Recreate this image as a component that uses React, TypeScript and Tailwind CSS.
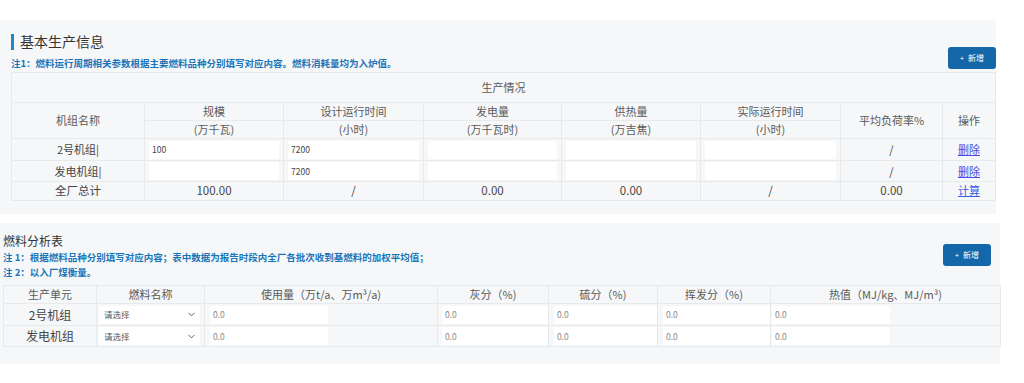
import { ChevronDown } from "lucide-react";

const font = { fontFamily: '"Noto Sans CJK SC", "Noto Sans", sans-serif' };

const units = [
  { name: "2号机组|", scale: "100", hours: "7200" },
  { name: "发电机组|", scale: "", hours: "7200" },
];

function AddButton() {
  return (
    <button className="flex h-[22px] w-[48px] items-center justify-center gap-[4px] rounded-[3px] bg-[#1467a8] text-[8px] text-white">
      <span className="text-[7px]">+</span>
      <span>新增</span>
    </button>
  );
}

function Cell({
  children,
  className = "",
  rowSpan,
  colSpan,
}: {
  children?: React.ReactNode;
  className?: string;
  rowSpan?: number;
  colSpan?: number;
}) {
  return (
    <td
      rowSpan={rowSpan}
      colSpan={colSpan}
      className={`border border-[#e8e9eb] p-0 text-center align-middle ${className}`}
    >
      {children}
    </td>
  );
}

function TextBox({ value, className = "" }: { value: string; className?: string }) {
  return (
    <div className={`flex h-[18px] items-center bg-white pl-[3px] text-left text-[8.5px] text-[#444] ${className}`}>
      {value}
    </div>
  );
}

function ProductionTable() {
  const widths = [133, 139, 140, 138, 139, 140, 102, 53];
  return (
    <table className="ml-[11px] w-[984px] table-fixed border-collapse text-[11px] text-[#5a5a5a]">
      <colgroup>
        {widths.map((w, i) => (
          <col key={i} style={{ width: w }} />
        ))}
      </colgroup>
      <tbody>
        <tr className="h-[30px]">
          <Cell colSpan={8}>生产情况</Cell>
        </tr>
        <tr className="h-[18px]">
          <Cell rowSpan={2}>机组名称</Cell>
          <Cell>规模</Cell>
          <Cell>设计运行时间</Cell>
          <Cell>发电量</Cell>
          <Cell>供热量</Cell>
          <Cell>实际运行时间</Cell>
          <Cell rowSpan={2}>平均负荷率%</Cell>
          <Cell rowSpan={2}>操作</Cell>
        </tr>
        <tr className="h-[18px]">
          <Cell>(万千瓦)</Cell>
          <Cell>(小时)</Cell>
          <Cell>(万千瓦时)</Cell>
          <Cell>(万吉焦)</Cell>
          <Cell>(小时)</Cell>
        </tr>
        {units.map((u, i) => (
          <tr key={u.name} className={i === 0 ? "h-[22px]" : "h-[21px]"}>
            <Cell className="text-[#444]">{u.name}</Cell>
            <Cell className="px-[4px]"><TextBox value={u.scale} /></Cell>
            <Cell className="px-[4px]"><TextBox value={u.hours} /></Cell>
            <Cell className="px-[4px]"><TextBox value="" /></Cell>
            <Cell className="px-[4px]"><TextBox value="" /></Cell>
            <Cell className="px-[4px]"><TextBox value="" /></Cell>
            <Cell className="text-[#444]">/</Cell>
            <Cell>
              <a className="text-[11px] text-[#4b4be6] underline">删除</a>
            </Cell>
          </tr>
        ))}
        <tr className="h-[19px] text-[11.5px] text-[#444]">
          <Cell>全厂总计</Cell>
          <Cell>100.00</Cell>
          <Cell>/</Cell>
          <Cell>0.00</Cell>
          <Cell>0.00</Cell>
          <Cell>/</Cell>
          <Cell>0.00</Cell>
          <Cell>
            <a className="text-[11px] text-[#3a5fe0] underline">计算</a>
          </Cell>
        </tr>
      </tbody>
    </table>
  );
}

function FuelTable() {
  const widths = [93, 108, 233, 111, 109, 113, 230];
  const headers = ["生产单元", "燃料名称", "使用量（万t/a、万m³/a)", "灰分（%)", "硫分（%)", "挥发分（%)", "热值（MJ/kg、MJ/m³)"];
  return (
    <table className="ml-[3px] w-[997px] table-fixed border-collapse text-[11px] text-[#5a5a5a]">
      <colgroup>
        {widths.map((w, i) => (
          <col key={i} style={{ width: w }} />
        ))}
      </colgroup>
      <tbody>
        <tr className="h-[18px]">
          {headers.map((h) => (
            <Cell key={h}>{h}</Cell>
          ))}
        </tr>
        {["2号机组", "发电机组"].map((name, i) => (
          <tr key={name} className={i === 0 ? "h-[22px]" : "h-[21px]"}>
            <Cell className="text-[12px] text-[#444]">{name}</Cell>
            <Cell className="pl-[2px] pr-[4px]">
              <div className="flex h-[18px] items-center justify-between bg-white pl-[5px] pr-[3px] text-[8.5px] text-[#555]">
                <span>请选择</span>
                <ChevronDown size={11} strokeWidth={2} className="text-[#555]" />
              </div>
            </Cell>
            <Cell className="pl-[5px]"><TextBox value="0.0" className="w-[118px] text-[#888]" /></Cell>
            <Cell className="pl-[4px]"><TextBox value="0.0" className="w-full text-[#888]" /></Cell>
            <Cell className="pl-[5px]"><TextBox value="0.0" className="w-full text-[#888]" /></Cell>
            <Cell className="pl-[5px]"><TextBox value="0.0" className="w-full text-[#888]" /></Cell>
            <Cell className="pl-[1px]"><TextBox value="0.0" className="w-[118px] text-[#888]" /></Cell>
          </tr>
        ))}
      </tbody>
    </table>
  );
}

export default function App() {
  return (
    <div className="h-[383px] w-[1024px] overflow-hidden bg-white" style={font}>
      {/* 基本生产信息 */}
      <section className="mt-[20px] w-[996px] bg-[#f6f7f8] pb-[13px]">
        <div className="flex items-end justify-between pt-[13px]">
          <div className="pl-[11px]">
            <div className="flex h-[17px] items-center gap-[6px]">
              <span className="h-[16px] w-[3px] bg-[#1e88c8]" />
              <span className="text-[14px] text-[#333]">基本生产信息</span>
            </div>
            <p className="mt-[6px] h-[14px] text-[9.5px] font-bold leading-[14px] text-[#1a75b8]">
              注1：燃料运行周期相关参数根据主要燃料品种分别填写对应内容。燃料消耗量均为入炉值。
            </p>
          </div>
          <div className="mb-[1px]">
            <AddButton />
          </div>
        </div>
        <div className="mt-[2px]">
          <ProductionTable />
        </div>
      </section>

      {/* 燃料分析表 */}
      <section className="mt-[9px] w-[1000px] bg-[#f6f7f8] pb-[17px]">
        <div className="flex items-start justify-between pt-[10px]">
          <div className="pl-[3px]">
            <h3 className="h-[16px] text-[12px] leading-[16px] text-[#333]">燃料分析表</h3>
            <p className="mt-[1px] h-[15px] text-[9.5px] font-bold leading-[15px] text-[#1a75b8]">
              注 1：根据燃料品种分别填写对应内容；表中数据为报告时段内全厂各批次收到基燃料的加权平均值；
            </p>
            <p className="h-[15px] text-[9.5px] font-bold leading-[15px] text-[#1a75b8]">注 2：以入厂煤衡量。</p>
          </div>
          <div className="mr-[9px] mt-[11px]">
            <AddButton />
          </div>
        </div>
        <div className="mt-[5px]">
          <FuelTable />
        </div>
      </section>
    </div>
  );
}
